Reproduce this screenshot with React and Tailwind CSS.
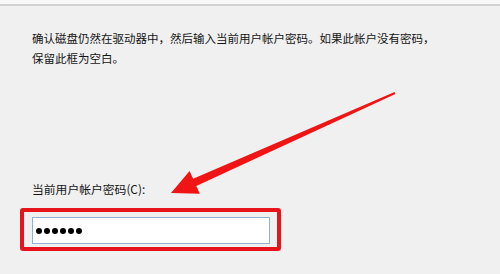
export default function App() {
  const font = { fontFamily: '"Noto Sans CJK SC", "Noto Sans", sans-serif' };
  return (
    <div
      className="relative w-[500px] h-[274px] overflow-hidden bg-[#f0f0f0] text-[#141414]"
      style={font}
    >
      {/* window top edge */}
      <div className="h-[4px] bg-[#f8f8f8]" />
      <div className="h-[2px] bg-[#d2d2d2]" />

      {/* description */}
      <div className="pl-8 pt-[22px] text-[11.5px] leading-[20px]">
        <div>确认磁盘仍然在驱动器中，然后输入当前用户帐户密码。如果此帐户没有密码，</div>
        <div>保留此框为空白。</div>
      </div>

      {/* label */}
      <div className="pl-8 mt-[111px] text-[11.8px] leading-[20px]">当前用户帐户密码(C):</div>

      {/* password field with red highlight */}
      <div className="ml-5 mt-[9px] w-[261px] h-[43px] border-4 border-[#e8141b] rounded-[3px] pl-2 pt-[5px]">
        <div className="w-[238px] h-[27px] border border-[#8fb0cf] bg-white flex items-center gap-[2px] pl-[3px]">
          <span className="w-[6px] h-[6px] rounded-full bg-black" />
          <span className="w-[6px] h-[6px] rounded-full bg-black" />
          <span className="w-[6px] h-[6px] rounded-full bg-black" />
          <span className="w-[6px] h-[6px] rounded-full bg-black" />
          <span className="w-[6px] h-[6px] rounded-full bg-black" />
          <span className="w-[6px] h-[6px] rounded-full bg-black" />
        </div>
      </div>

      {/* annotation arrow drawn over the dialog */}
      <svg className="absolute left-0 top-0 pointer-events-none" width="500" height="274" viewBox="0 0 500 274">
        <polygon
          fill="#f01414"
          points="171,193 199.8,193.8 196.3,186 395.4,93.9 394.6,92.1 193.1,178.8 189.6,171"
        />
      </svg>
    </div>
  );
}
